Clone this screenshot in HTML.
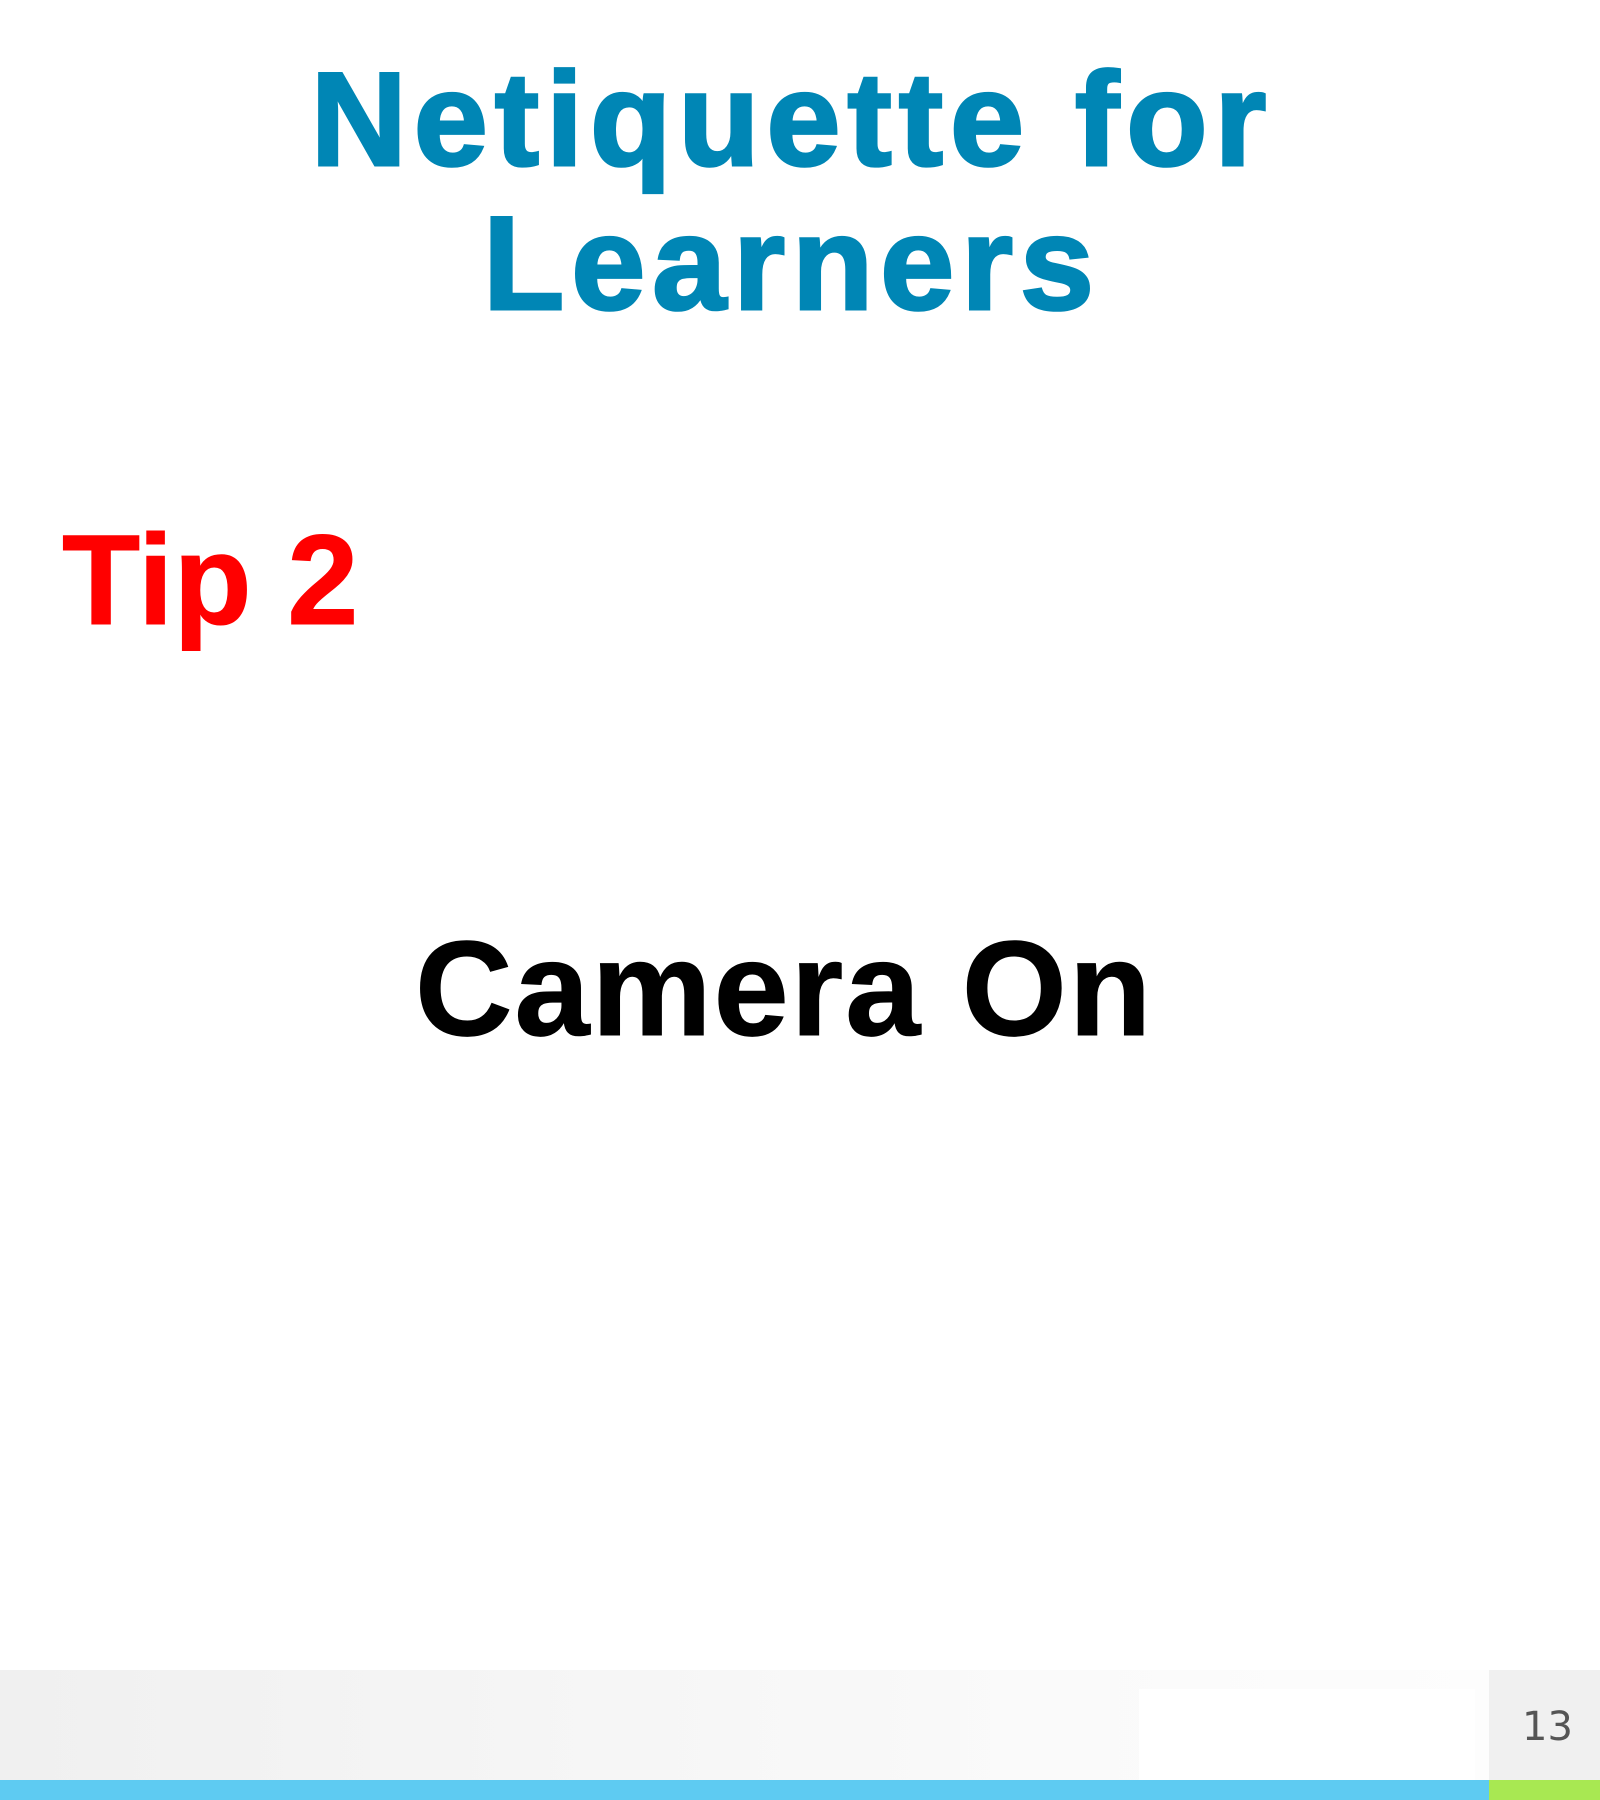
<!DOCTYPE html>
<html><head><style>
html,body{margin:0;padding:0}
body{width:1600px;height:1800px;position:relative;background:#fff;overflow:hidden;font-family:"Liberation Sans",sans-serif}
.t{position:absolute;white-space:nowrap;line-height:1}
.title{color:#0086b5;font-weight:bold;font-size:133px;letter-spacing:7px;-webkit-text-stroke:3px #0086b5;left:-8px;width:1600px;text-align:center}
</style></head><body>
<div class="t title" style="top:54px">Netiquette for</div>
<div class="t title" style="top:198px">Learners</div>
<div class="t" style="left:62px;top:517px;font-size:128px;font-weight:bold;color:#ff0000;-webkit-text-stroke:1px #f00">Tip 2</div>
<div class="t" style="left:415px;top:921px;font-size:135px;font-weight:bold;color:#000;letter-spacing:2px;-webkit-text-stroke:1px #000">Camera On</div>
<div style="position:absolute;left:0;top:1670px;width:1489px;height:110px;background:linear-gradient(90deg,#f0f0f0,#fafafa 70%,#fdfdfd)"></div>
<div style="position:absolute;left:1139px;top:1689px;width:336px;height:91px;background:#fff"></div>
<div style="position:absolute;left:1489px;top:1670px;width:111px;height:110px;background:#f0f0f0"></div>
<div class="t" style="left:1522px;top:1707px;font-size:40px;color:#555;font-family:'DejaVu Sans',sans-serif">13</div>
<div style="position:absolute;left:0;top:1780px;width:1489px;height:20px;background:#5ecbf2"></div>
<div style="position:absolute;left:1489px;top:1780px;width:111px;height:20px;background:#a8e852"></div>
</body></html>
